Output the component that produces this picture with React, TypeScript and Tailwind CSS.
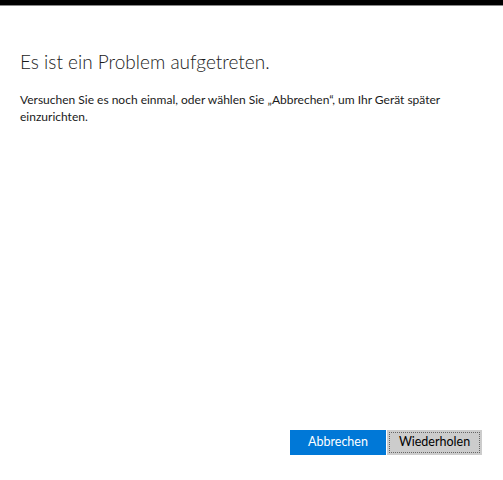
export default function App() {
  return (
    <div className="flex h-[480px] w-[503px] flex-col bg-white font-['Lato','Open_Sans',sans-serif] text-[#000]">
      <div className="h-[5px] w-full bg-black" />
      <div className="h-px w-full bg-[#8a8a8a]" />
      <div className="flex flex-1 flex-col px-5">
        <h1 className="mt-[42px] text-[19px] font-light leading-[28px] text-[#1a1a1a]">
          Es ist ein Problem aufgetreten.
        </h1>
        <p className="mt-[15px] w-[440px] text-[12px] leading-[17px] text-[#1a1a1a]">
          Versuchen Sie es noch einmal, oder wählen Sie „Abbrechen“, um Ihr Gerät später einzurichten.
        </p>
        <div className="mt-auto mb-[25px] flex justify-end gap-px pr-[1px]">
          <button className="h-[25px] w-[96px] bg-[#0078d7] text-[12.5px] text-white">Abbrechen</button>
          <button className="h-[25px] w-[95px] border-2 border-[#cccccc] bg-[#cccccc] text-[12.5px] text-black outline-1 outline-dotted outline-offset-[-3px] outline-[#666]">
            Wiederholen
          </button>
        </div>
      </div>
    </div>
  );
}
